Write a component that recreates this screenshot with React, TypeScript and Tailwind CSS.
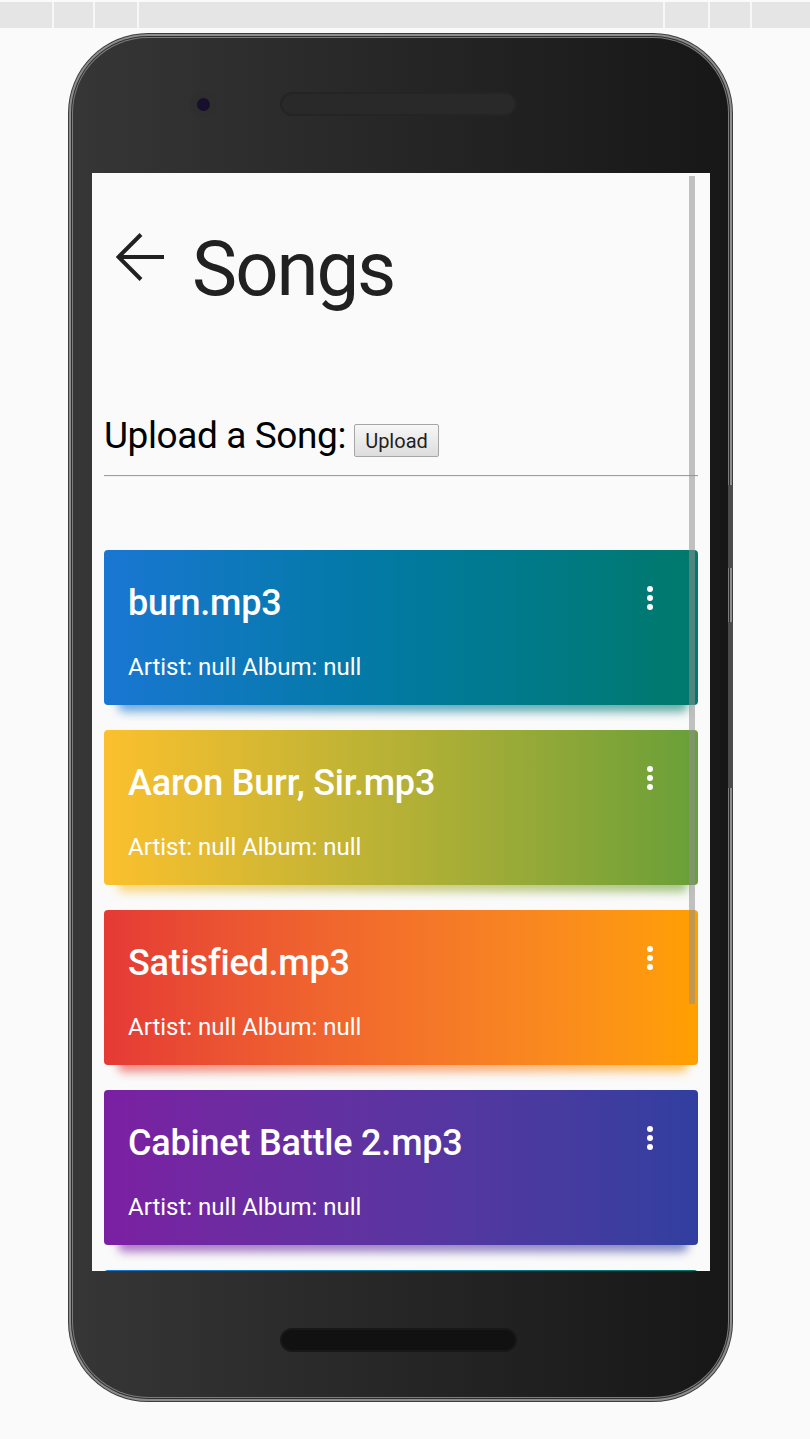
import React from 'react';

type Song = {
  name: string;
  gradient: string;
};

const songs: Song[] = [
  { name: 'burn.mp3', gradient: 'from-[#1976d2] to-[#00796b]' },
  { name: 'Aaron Burr, Sir.mp3', gradient: 'from-[#fbc02d] to-[#689f38]' },
  { name: 'Satisfied.mp3', gradient: 'from-[#e53935] to-[#ffa000]' },
  { name: 'Cabinet Battle 2.mp3', gradient: 'from-[#7b1fa2] to-[#303f9f]' },
];

const toolbarSegments = ['w-[52px]', 'w-[41px]', 'w-[44px]', 'w-[526px]', 'w-[45px]', 'w-[42px]', 'flex-1'];

const MoreIcon: React.FC = () => (
  <svg width="12" height="24" viewBox="0 0 12 24" className="mt-[1px] shrink-0">
    <circle cx="6" cy="3" r="3" fill="#fff" />
    <circle cx="6" cy="12" r="3" fill="#fff" />
    <circle cx="6" cy="21" r="3" fill="#fff" />
  </svg>
);

const SongCard: React.FC<{ song: Song }> = ({ song }) => (
  <div className="relative isolate">
    {/* soft coloured shadow under the card */}
    <div
      className={`absolute left-[14px] right-[10px] top-[12px] bottom-[-7px] -z-10 rounded-md bg-linear-to-r ${song.gradient} opacity-60 blur-[5px]`}
    />
    <div className={`h-[155px] rounded-[4px] bg-linear-to-r ${song.gradient} pl-6 pr-[42px] pt-[35px] text-white`}>
      <div className="flex items-start justify-between">
        <h3 className="text-[36px] font-medium leading-none tracking-[-0.2px]">{song.name}</h3>
        <MoreIcon />
      </div>
      <p className="mt-[34px] text-[24px] leading-none">Artist: null Album: null</p>
    </div>
  </div>
);

const App: React.FC = () => {
  return (
    <div className="min-h-screen bg-[#fafafa] pt-[2px] font-[Roboto,'Noto_Sans',sans-serif]">
      <div className="flex h-[26px]">
        {toolbarSegments.map((w, i) => (
          <div key={i} className={`${w} h-full bg-[#e5e5e5] ${i > 0 ? 'border-l-2 border-[#f7f7f7]' : ''}`} />
        ))}
      </div>

      <div className="relative ml-[68px] mt-[5px] w-[665px]">
        <div className="rounded-[80px] bg-[#3c3c3c] p-px">
          <div className="rounded-[79px] bg-[#8e8e8e] p-[2px]">
            <div className="rounded-[77px] bg-[#2e2e2e] p-px">
              <div className="rounded-[76px] bg-[#7c7c7c] p-px">
                <div className="flex h-[1359px] flex-col rounded-[75px] bg-linear-to-r from-[#363636] to-[#171717]">
                  <div className="mt-[54px] flex h-6 items-center pl-[117px]">
                    <div className="flex h-[26px] w-[26px] items-center justify-center rounded-full bg-[#2e2e2e]">
                      <div className="h-[13px] w-[13px] rounded-full bg-[#170f2c]" />
                    </div>
                    <div className="ml-16 h-6 w-[237px] rounded-full border-2 border-[#242424] bg-[#292929]" />
                  </div>

                  <div className="relative ml-[19px] mt-[57px] h-[1098px] w-[618px] overflow-hidden bg-[#fafafa]">
                    <div className="px-3">
                      <div className="flex items-start pt-[58px]">
                        <svg width="48" height="48" viewBox="0 0 48 48" className="ml-3 mt-[2px] shrink-0">
                          <path d="M48 24H3M25 1.5 2.5 24 25 46.5" fill="none" stroke="#212121" strokeWidth="4" />
                        </svg>
                        <h1 className="ml-[28px] text-[76px] leading-none tracking-[-2px] text-[#212121]">Songs</h1>
                      </div>

                      <div className="mt-[110px] flex items-start">
                        <span className="text-[37px] leading-none tracking-[-0.4px] text-black">Upload a Song:</span>
                        <button className="ml-[8px] mt-[7px] h-[33px] w-[85px] rounded-[2px] border border-[#a6a6a6] bg-linear-to-b from-[#f7f7f7] to-[#dddddd] text-[20px] leading-none text-[#1f1f1f]">
                          Upload
                        </button>
                      </div>

                      <hr className="mt-[18px] border-0 border-t border-b border-t-[#9e9e9e] border-b-[#efefef]" />

                      <div className="mt-[73px] flex flex-col gap-[25px]">
                        {songs.map((s, i) => (
                          <SongCard key={i} song={s} />
                        ))}
                        {/* next card peeking in at the bottom edge */}
                        <div className="h-[155px] rounded-[4px] bg-linear-to-r from-[#1976d2] to-[#00796b]" />
                      </div>
                    </div>

                    {/* scrollbar thumb */}
                    <div className="absolute left-[597px] top-[3px] h-[828px] w-[6px] bg-[rgba(144,144,144,0.55)]" />
                  </div>

                  <div className="ml-[207px] mt-[57px] h-6 w-[237px] rounded-full border-2 border-[#181818] bg-[#111111]" />
                </div>
              </div>
            </div>
          </div>
        </div>

        {/* side buttons */}
        <div className="absolute right-0 top-[452px] h-[83px] w-[5px] bg-[#4b4b4b]" />
        <div className="absolute right-0 top-[589px] h-[166px] w-[5px] bg-[#4b4b4b]" />
      </div>
    </div>
  );
};

export default App;
